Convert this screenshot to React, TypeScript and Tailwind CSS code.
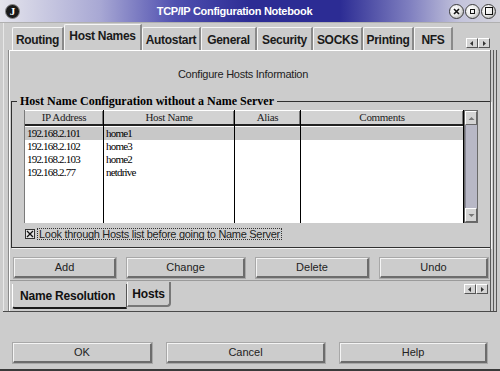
import React from 'react';

const topTabs = [
  { label: 'Routing', w: 'w-[52px]', active: false },
  { label: 'Host Names', w: 'w-[78px]', active: true },
  { label: 'Autostart', w: 'w-[59px]', active: false },
  { label: 'General', w: 'w-[56px]', active: false },
  { label: 'Security', w: 'w-[56px]', active: false },
  { label: 'SOCKS', w: 'w-[50px]', active: false },
  { label: 'Printing', w: 'w-[51px]', active: false },
  { label: 'NFS', w: 'w-[39px]', active: false },
];

const columns = [
  { title: 'IP Address', w: 'w-[79px]' },
  { title: 'Host Name', w: 'w-[131px]' },
  { title: 'Alias', w: 'w-[66px]' },
  { title: 'Comments', w: 'w-[163px]' },
];

const hosts = [
  ['192.168.2.101', 'home1', '', ''],
  ['192.168.2.102', 'home3', '', ''],
  ['192.168.2.103', 'home2', '', ''],
  ['192.168.2.77', 'netdrive', '', ''],
];

const Button: React.FC<{ label: string; w: string }> = ({ label, w }) => (
  <div
    className={`${w} h-[20px] flex items-center justify-center border-t border-l border-t-[#f4f4f4] border-l-[#f4f4f4] border-r-2 border-b-2 border-r-[#6c6c6c] border-b-[#6c6c6c] shadow-[0_0_0_1px_#a8a8a8] text-[11px] text-[#222]`}
  >
    {label}
  </div>
);

// tiny left/right arrow pair used by the notebook tab rows
const TabArrows: React.FC<{ className?: string }> = ({ className }) => (
  <div className={`flex ${className ?? ''}`}>
    {['M6 2 L3 4.5 L6 7 Z', 'M4 2 L7 4.5 L4 7 Z'].map((d) => (
      <div
        key={d}
        className="w-[12px] h-[10px] bg-[#d4d4d4] border-t border-l border-t-white border-l-white border-r border-b border-r-[#555] border-b-[#555] flex items-center justify-center"
      >
        <svg width="10" height="9" viewBox="0 0 10 9">
          <path d={d} fill="#333" />
        </svg>
      </div>
    ))}
  </div>
);

const RoundButton: React.FC<{ children: React.ReactNode }> = ({ children }) => (
  <div className="w-[15px] h-[15px] rounded-full border border-[#3c3c3c] bg-[radial-gradient(circle_at_35%_35%,#ffffff_0%,#e8e8e8_50%,#9a9a9a_100%)] flex items-center justify-center">
    {children}
  </div>
);

const TitleBar: React.FC = () => (
  <div className="h-[23px] flex items-center bg-[linear-gradient(90deg,#e4e4ec_0%,#a8a8d4_20%,#5050b0_35%,#2c2c94_50%,#2c2c94_68%,#8080c0_82%,#c4c4dc_92%,#d4d4dc_100%)] border-b border-b-[#b0b0b0]">
    <div className="ml-[5px] w-[15px] h-[15px] rounded-full bg-[#1a1a1a] border border-[#8a8a8a] flex items-center justify-center">
      <span className="text-white font-bold text-[11px] leading-none font-[family-name:Liberation_Serif,serif]">J</span>
    </div>
    <div className="flex-1 text-center text-white font-bold text-[11px] tracking-[-0.3px]">
      TCP/IP Configuration Notebook
    </div>
    <div className="flex gap-[1px] mr-[4px]">
      <RoundButton>
        <svg width="7" height="7" viewBox="0 0 7 7">
          <path d="M1 1 L6 6 M6 1 L1 6" stroke="#111" strokeWidth="1.6" />
        </svg>
      </RoundButton>
      <RoundButton>
        <div className="w-[5px] h-[5px] border border-[#111]" />
      </RoundButton>
      <RoundButton>
        <div className="w-[8px] h-[8px] border-[1.5px] border-[#111]" />
      </RoundButton>
    </div>
  </div>
);

const HostTable: React.FC = () => (
  <div className="flex h-[113px]">
    <div className="flex bg-white border-l border-l-[#7a7a7a]">
      {columns.map((col, ci) => (
        <div key={col.title} className={`${col.w} flex flex-col border-r border-r-black`}>
          <div className="h-[16px] mb-[1px] bg-[#d2d2d2] border-t border-t-white border-b-2 border-b-[#222] shadow-[inset_-1px_0_0_#777] flex items-center justify-center text-[11px] text-[#222] tracking-[-0.3px] font-[family-name:Liberation_Serif,serif]">
            {col.title}
          </div>
          {hosts.map((row, ri) => (
            <div
              key={ri}
              className={`h-[13px] pl-[2px] flex items-center text-[11px] tracking-[-0.8px] text-black font-[family-name:Liberation_Serif,serif] ${
                ri === 0 ? 'bg-[#c8c8c8]' : ''
              }`}
            >
              {row[ci]}
            </div>
          ))}
        </div>
      ))}
    </div>
    <div className="w-[14px] flex flex-col border border-[#6a6a6a]">
      <div className="h-[14px] bg-[#d4d4d4] border-t border-l border-t-white border-l-white border-r border-b border-r-[#666] border-b-[#666] flex items-center justify-center">
        <svg width="7" height="5" viewBox="0 0 7 5">
          <path d="M0.5 4 L3.5 1 L6.5 4 Z" fill="#777" />
        </svg>
      </div>
      <div className="flex-1 bg-[#b8b8c6] border-l border-l-[#8a8a98]" />
      <div className="h-[14px] bg-[#d4d4d4] border-t border-l border-t-white border-l-white border-r border-b border-r-[#666] border-b-[#666] flex items-center justify-center">
        <svg width="7" height="5" viewBox="0 0 7 5">
          <path d="M0.5 1 L3.5 4 L6.5 1 Z" fill="#777" />
        </svg>
      </div>
    </div>
  </div>
);

export default function App() {
  return (
    <div className="w-[500px] h-[371px] bg-[#cccccc] flex flex-col overflow-hidden border-b-2 border-b-[#3a3a3a] font-[family-name:Liberation_Sans,Arial,sans-serif] text-[#111]">
      <TitleBar />

      <div className="mx-[3px] flex flex-col">
        {/* major tabs */}
        <div className="h-[27px] flex items-end pl-[8px] border-l border-l-[#e8e8e8]">
          {topTabs.map((t) => (
            <div
              key={t.label}
              className={`${t.w} ${
                t.active ? 'h-[26px] pb-[3px]' : 'h-[23px] pt-[1px]'
              } flex items-center justify-center border-t border-l border-t-[#f6f6f6] border-l-[#f6f6f6] border-r-2 border-r-[#8a8a8a] rounded-tl-[2px] text-[12px] font-bold tracking-[-0.3px] text-[#1a1a1a]`}
            >
              {t.label}
            </div>
          ))}
          <TabArrows className="ml-auto mr-[7px] mb-[2px]" />
        </div>

        {/* notebook body */}
        <div className="h-[262px] flex border-b border-b-[#4a4a4a]">
          <div className="w-[6px] border-l border-r border-l-[#e8e8e8] border-r-[#8a8a8a]" />
          <div className="w-[481px] flex flex-col border-t border-t-white border-l border-l-white">
            <div className="pt-[17px] h-[30px] leading-[13px] text-center text-[11px] tracking-[-0.25px] text-[#222] mr-[14px]">
              Configure Hosts Information
            </div>

            <fieldset className="mt-[14px] ml-[1px] w-[479px] border border-[#303030] shadow-[1px_1px_0_#f4f4f4] pl-[12px] pr-[12px] pb-[7px]">
              <legend className="-ml-[7px] px-[3px] h-[12px] leading-[12px] text-[12px] font-bold text-black font-[family-name:Liberation_Serif,serif]">
                Host Name Configuration without a Name Server
              </legend>
              <div className="pt-[3px]">
                <HostTable />
                <div className="mt-[5px] h-[12px] flex items-center">
                  <div className="ml-[1px] w-[10px] h-[10px] border border-[#333] bg-[#e4e4e4] flex items-center justify-center">
                    <svg width="8" height="8" viewBox="0 0 8 8">
                      <path d="M1 1 L7 7 M7 1 L1 7" stroke="#111" strokeWidth="1.3" />
                    </svg>
                  </div>
                  <div className="ml-[2px] h-[12px] px-[1px] border border-dotted border-[#333] leading-[10px] text-[11px] tracking-[-0.3px] text-[#222]">
                    Look through Hosts list before going to Name Server
                  </div>
                </div>
              </div>
            </fieldset>

            <div className="mt-[10px] pl-[4px] flex gap-[11px]">
              <Button label="Add" w="w-[102px]" />
              <Button label="Change" w="w-[118px]" />
              <Button label="Delete" w="w-[113px]" />
              <Button label="Undo" w="w-[108px]" />
            </div>

            {/* minor tabs */}
            <div className="mt-[2px] flex-1 flex items-start pl-[2px] border-t border-t-[#9a9a9a]">
              <div className="w-[115px] h-[25px] mt-[3px] pl-[7px] flex items-center border-l border-l-white border-b-2 border-b-[#1a1a1a] border-r border-r-[#555] rounded-bl-[3px] text-[12px] font-bold tracking-[-0.2px]">
                Name Resolution
              </div>
              <div className="w-[44px] h-[25px] mt-[1px] flex items-center justify-center border-l border-l-[#f4f4f4] border-r-2 border-b-2 border-r-[#777] border-b-[#777] rounded-br-[4px] text-[12px] font-bold tracking-[-0.2px]">
                Hosts
              </div>
              <TabArrows className="ml-auto mr-[2px] mt-[3px]" />
            </div>
          </div>
          <div className="w-[7px] flex">
            <div className="w-[3px] border-l border-l-[#5a5a5a]" />
            <div className="w-[4px] border-l border-r border-l-[#5a5a5a] border-r-[#5a5a5a]" />
          </div>
        </div>
      </div>

      {/* dialog buttons */}
      <div className="flex-1 pt-[31px] pl-[13px] flex gap-[15px]">
        <Button label="OK" w="w-[139px]" />
        <Button label="Cancel" w="w-[158px]" />
        <Button label="Help" w="w-[147px]" />
      </div>
    </div>
  );
}
